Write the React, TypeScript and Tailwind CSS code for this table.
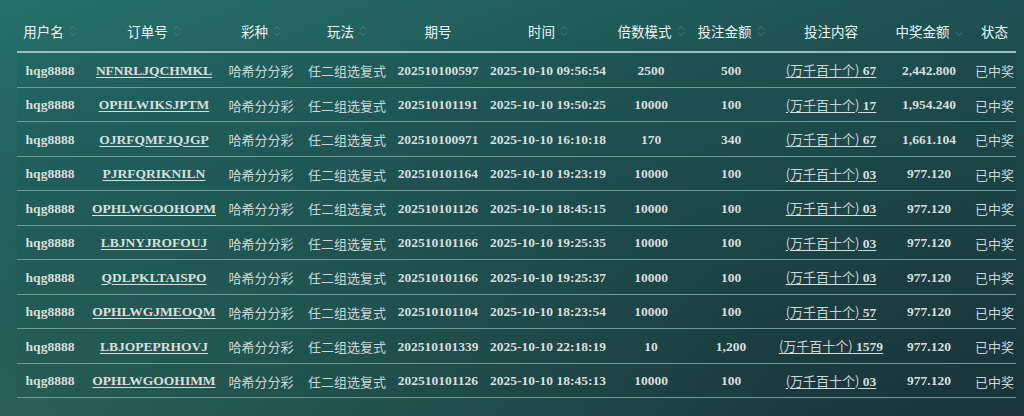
import React from 'react';

type Row = {
  order: string;
  issue: string;
  time: string;
  multiple: string;
  amount: string;
  content: string;
  prize: string;
};

const rows: Row[] = [
  { order: 'NFNRLJQCHMKL', issue: '202510100597', time: '2025-10-10 09:56:54', multiple: '2500', amount: '500', content: '67', prize: '2,442.800' },
  { order: 'OPHLWIKSJPTM', issue: '202510101191', time: '2025-10-10 19:50:25', multiple: '10000', amount: '100', content: '17', prize: '1,954.240' },
  { order: 'OJRFQMFJQJGP', issue: '202510100971', time: '2025-10-10 16:10:18', multiple: '170', amount: '340', content: '67', prize: '1,661.104' },
  { order: 'PJRFQRIKNILN', issue: '202510101164', time: '2025-10-10 19:23:19', multiple: '10000', amount: '100', content: '03', prize: '977.120' },
  { order: 'OPHLWGOOHOPM', issue: '202510101126', time: '2025-10-10 18:45:15', multiple: '10000', amount: '100', content: '03', prize: '977.120' },
  { order: 'LBJNYJROFOUJ', issue: '202510101166', time: '2025-10-10 19:25:35', multiple: '10000', amount: '100', content: '03', prize: '977.120' },
  { order: 'QDLPKLTAISPO', issue: '202510101166', time: '2025-10-10 19:25:37', multiple: '10000', amount: '100', content: '03', prize: '977.120' },
  { order: 'OPHLWGJMEOQM', issue: '202510101104', time: '2025-10-10 18:23:54', multiple: '10000', amount: '100', content: '57', prize: '977.120' },
  { order: 'LBJOPEPRHOVJ', issue: '202510101339', time: '2025-10-10 22:18:19', multiple: '10', amount: '1,200', content: '1579', prize: '977.120' },
  { order: 'OPHLWGOOHIMM', issue: '202510101126', time: '2025-10-10 18:45:13', multiple: '10000', amount: '100', content: '03', prize: '977.120' },
];

const cols = 'grid grid-cols-[66px_142px_72px_100px_82px_138px_68px_92px_108px_88px_43px]';
const serif = "font-['Liberation_Serif','Noto_Sans_CJK_SC',serif] font-bold";
const cjk = "font-['Noto_Sans_CJK_SC',sans-serif] font-normal";

function SortIcon({ onlyDown }: { onlyDown?: boolean }) {
  return (
    <svg width="8" height="14" viewBox="0 0 8 14" fill="none" className="ml-[5px] shrink-0">
      {!onlyDown && <path d="M1 5.5 L4 2.5 L7 5.5" stroke="#53807a" strokeWidth="1" />}
      <path d="M1 8.5 L4 11.5 L7 8.5" stroke="#53807a" strokeWidth="1" />
    </svg>
  );
}

const headers: { label: string; sort?: 'both' | 'down' }[] = [
  { label: '用户名', sort: 'both' },
  { label: '订单号', sort: 'both' },
  { label: '彩种', sort: 'both' },
  { label: '玩法', sort: 'both' },
  { label: '期号' },
  { label: '时间', sort: 'both' },
  { label: '倍数模式', sort: 'both' },
  { label: '投注金额', sort: 'both' },
  { label: '投注内容' },
  { label: '中奖金额', sort: 'down' },
  { label: '状态' },
];

export default function App() {
  return (
    <div className="w-[1024px] h-[416px] overflow-hidden bg-[radial-gradient(ellipse_at_0%_100%,rgba(48,110,95,0.55)_0%,rgba(48,110,95,0)_55%),linear-gradient(160deg,#25716a_0%,#1f5856_35%,#1c4546_70%,#19353a_100%)] pt-[12px] pl-[17px]">
      <div className="w-[999px]">
        <div className={`${cols} h-[41px] border-b-2 border-[#9fbfba] text-[13.5px] text-[#eef3f1] ${cjk}`}>
          {headers.map((h) => (
            <div key={h.label} className="flex items-center justify-center pb-[1px]">
              <span>{h.label}</span>
              {h.sort && <SortIcon onlyDown={h.sort === 'down'} />}
            </div>
          ))}
        </div>
        {rows.map((r, i) => (
          <div
            key={i}
            className={`${cols} h-[34.5px] pt-[2px] border-b-[1.5px] border-[#6f9b95] bg-black/[0.03] text-[13.5px] text-[#d9dedb] items-center text-center`}
          >
            <div className={serif}>hqg8888</div>
            <div className={serif}>
              <span className="underline underline-offset-2 decoration-1">{r.order}</span>
            </div>
            <div className={`${cjk} text-[13px] text-[#cfd6d3]`}>哈希分分彩</div>
            <div className={`${cjk} text-[13px] text-[#cfd6d3]`}>任二组选复式</div>
            <div className={serif}>{r.issue}</div>
            <div className={serif}>{r.time}</div>
            <div className={serif}>{r.multiple}</div>
            <div className={serif}>{r.amount}</div>
            <div>
              <span className="underline underline-offset-2 decoration-1 whitespace-nowrap">
                <span className={`${cjk} text-[13px] text-[#cfd6d3]`}>(万千百十个)</span>
                <span className={serif}> {r.content}</span>
              </span>
            </div>
            <div className={serif}>{r.prize}</div>
            <div className={`${cjk} text-[13px] text-[#cfd6d3] whitespace-nowrap`}>已中奖</div>
          </div>
        ))}
      </div>
    </div>
  );
}
